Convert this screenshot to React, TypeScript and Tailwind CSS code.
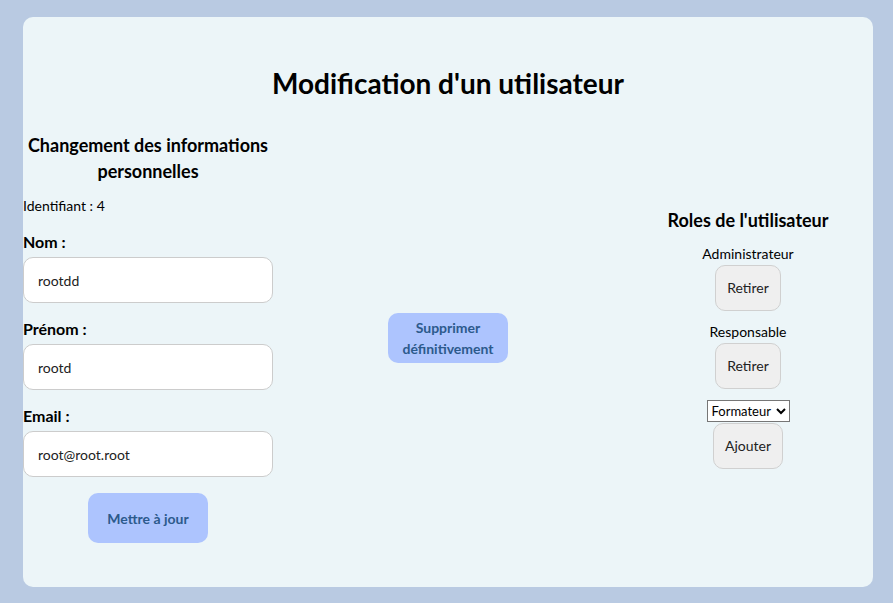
import React from 'react'

const font = { fontFamily: 'Lato, "Noto Sans", sans-serif' }

function Field({ label, value }: { label: string; value: string }) {
  return (
    <div className="flex flex-col">
      <label className="text-[16px] font-bold leading-[20px] text-black mb-[5px]">{label}</label>
      <input
        defaultValue={value}
        className="h-[46px] w-full rounded-[10px] border border-[#cccccc] bg-white px-[14px] text-[14px] text-[#222] outline-none"
      />
    </div>
  )
}

function GreyButton({ children }: { children: React.ReactNode }) {
  return (
    <button className="h-[46px] rounded-[10px] border border-[#d0d0d0] bg-[#efefef] px-[11px] text-[14px] text-[#222]">
      {children}
    </button>
  )
}

export default function App() {
  return (
    <div className="min-h-[603px] w-full bg-[#b9cae2] pl-[23px] pr-[20px] py-[17px]" style={font}>
      <div className="rounded-[10px] bg-[#ecf5f8] pt-[46px] pb-[44px]">
        <h1 className="text-center text-[28px] font-bold leading-[40px] text-black">
          Modification d'un utilisateur
        </h1>

        <div className="mt-[29px] flex items-center justify-between">
          {/* Infos personnelles */}
          <div className="flex w-[250px] flex-col">
            <h2 className="text-center text-[18px] font-bold leading-[26px] text-black">
              Changement des informations personnelles
            </h2>
            <p className="mt-[12px] text-[14px] leading-[20px] text-black">Identifiant : 4</p>
            <div className="mt-[16px] flex flex-col gap-[16px]">
              <Field label="Nom :" value="rootdd" />
              <Field label="Prénom :" value="rootd" />
              <Field label="Email :" value="root@root.root" />
            </div>
            <div className="mt-[16px] flex justify-center">
              <button className="h-[50px] w-[120px] rounded-[10px] bg-[#adc4fe] text-[14px] font-bold text-[#2c5a8c]">
                Mettre à jour
              </button>
            </div>
          </div>

          {/* Suppression */}
          <button className="h-[50px] w-[120px] rounded-[10px] bg-[#adc4fe] text-[14px] font-bold leading-[21px] text-[#2c5a8c]">
            Supprimer
            <br />
            définitivement
          </button>

          {/* Roles */}
          <div className="flex w-[250px] flex-col items-center">
            <h2 className="text-[18px] font-bold leading-[26px] text-black">Roles de l'utilisateur</h2>
            <p className="mt-[11px] text-[14px] leading-[20px] text-black">Administrateur</p>
            <div className="mt-[1px]">
              <GreyButton>Retirer</GreyButton>
            </div>
            <p className="mt-[11px] text-[14px] leading-[20px] text-black">Responsable</p>
            <div className="mt-[1px]">
              <GreyButton>Retirer</GreyButton>
            </div>
            <select
              defaultValue="Formateur"
              className="mt-[11px] h-[22px] w-[83px] border border-[#767676] bg-white px-0 text-[13px] text-black"
            >
              <option>Formateur</option>
              <option>Administrateur</option>
              <option>Responsable</option>
            </select>
            <div className="mt-[1px]">
              <GreyButton>Ajouter</GreyButton>
            </div>
          </div>
        </div>
      </div>
    </div>
  )
}
